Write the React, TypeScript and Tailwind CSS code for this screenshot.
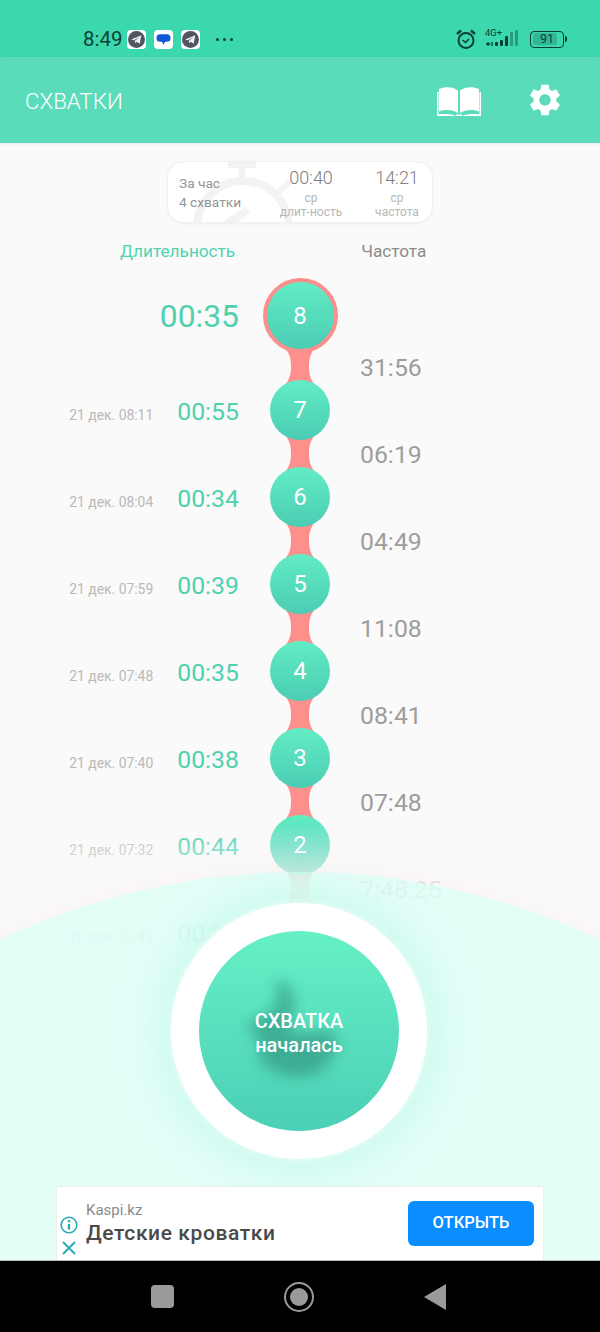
const nodes = [7, 6, 5, 4, 3, 2];

const leftRows = [
  { d: "21 дек. 08:11", t: "00:55" },
  { d: "21 дек. 08:04", t: "00:34" },
  { d: "21 дек. 07:59", t: "00:39" },
  { d: "21 дек. 07:48", t: "00:35" },
  { d: "21 дек. 07:40", t: "00:38" },
  { d: "21 дек. 07:32", t: "00:44" },
  { d: "20 дек. 22:43", t: "00:38" },
];
const freqs = ["31:56", "06:19", "04:49", "11:08", "08:41", "07:48", "7:48:25"];

function Tg() {
  return (
    <div className="w-[19px] h-[19px] rounded-[4px] bg-white flex items-center justify-center">
      <svg width="17" height="17" viewBox="0 0 16 16">
        <circle cx="8" cy="8" r="8" fill="#50555f" />
        <path d="M3 8 L12.5 4 L11 12 L8.2 10 L6.8 11.6 L6.5 9.2 L10.5 5.8 L5.5 8.8 Z" fill="#eeeeee" />
      </svg>
    </div>
  );
}

function Connector() {
  return (
    <svg width="30" height="37" viewBox="0 0 30 37" className="block -my-[5px]">
      <path d="M0 0 C5 6 6 12 6 18.5 C6 25 5 31 0 37 L30 37 C25 31 24 25 24 18.5 C24 12 25 6 30 0 Z" fill="#fd908d" />
    </svg>
  );
}

function Node({ n }: { n: number }) {
  return (
    <div className="relative w-[60px] h-[60px] rounded-full bg-gradient-to-b from-[#62ecc4] to-[#4bcdb4] flex items-center justify-center text-white text-[24px]">
      {n}
    </div>
  );
}

export default function App() {
  return (
    <div className="relative w-[600px] h-[1332px] overflow-hidden flex flex-col bg-[#fafafa] font-['Roboto',sans-serif]">
      {/* status bar */}
      <div className="h-[57px] shrink-0 bg-[#3bd8ae] flex items-end pb-[6px] pl-[83px] pr-[33px] text-[#0c3f33]">
        <span className="text-[20.5px] leading-[24px] mr-[4px]">8:49</span>
        <div className="flex items-center gap-[8px] h-[24px]">
          <Tg />
          <div className="w-[19px] h-[19px] rounded-[4px] bg-white flex items-center justify-center">
            <svg width="15" height="15" viewBox="0 0 14 14">
              <path d="M4 2 H10 A3.6 3.6 0 0 1 10 9.2 H8.4 L7 12 L5.6 9.2 H4 A3.6 3.6 0 0 1 4 2 Z" fill="#1058d8" />
            </svg>
          </div>
          <Tg />
          <div className="flex gap-[4px] ml-[8px]">
            <span className="w-[3px] h-[3px] rounded-full bg-[#0c3f33]" />
            <span className="w-[3px] h-[3px] rounded-full bg-[#0c3f33]" />
            <span className="w-[3px] h-[3px] rounded-full bg-[#0c3f33]" />
          </div>
        </div>
        <div className="ml-auto flex items-center h-[24px]">
          <svg width="22" height="22" viewBox="0 0 22 22" fill="none" stroke="#0c3f33" strokeWidth="2">
            <circle cx="11" cy="12.5" r="7.5" />
            <path d="M7.5 12 L10.5 14.5 L14 11" strokeWidth="1.6" />
            <path d="M2 6 L6 2.5 M20 6 L16 2.5" strokeWidth="2.4" />
          </svg>
          <div className="relative w-[38px] h-[20px] ml-[8px]">
            <span className="absolute left-0 -top-[1px] text-[9.5px] leading-[10px]">4G+</span>
            <svg width="38" height="20" viewBox="0 0 38 20" className="absolute inset-0">
              <path d="M1 15 H5 M3 13 V17 M7 13 V17" stroke="#0c3f33" strokeWidth="1.4" />
              <rect x="10" y="13" width="3" height="4" rx="1" fill="#0c3f33" />
              <rect x="15" y="11" width="3" height="6" rx="1" fill="#0c3f33" />
              <rect x="20" y="7" width="3" height="10" rx="1" fill="#0c3f33" />
              <rect x="25" y="3" width="3" height="14" rx="1" fill="#2a9c82" />
              <rect x="30" y="1" width="3" height="16" rx="1" fill="#2a9c82" />
            </svg>
          </div>
          <div className="ml-[7px] w-[34px] h-[17px] rounded-[4px] border-[1.5px] border-[#0c3f33] p-[1.5px] relative">
            <div className="w-[84%] h-full rounded-[2px] bg-[#31b795]" />
            <span className="absolute inset-0 flex items-center justify-center text-[12.5px] leading-none">91</span>
          </div>
          <span className="ml-[1px] w-[2px] h-[6px] rounded-r-sm bg-[#0c3f33]" />
        </div>
      </div>

      {/* header */}
      <div className="relative z-10 h-[86px] shrink-0 bg-[#5adcbb] flex items-center pl-[25px] shadow-[0_1px_4px_rgba(0,0,0,0.08)]">
        <span className="text-white text-[22.3px] font-light mt-[3px]">СХВАТКИ</span>
        <svg width="46" height="32" viewBox="0 0 46 32" className="ml-auto mt-[4px]" fill="#fff">
          <path d="M3 3 C10 0 17 1 22 4.5 V27 C17 24 10 23 3 25.5 Z" />
          <path d="M43 3 C36 0 29 1 24 4.5 V27 C29 24 36 23 43 25.5 Z" />
          <path d="M1 6 V30 H20 C16 28 8 27.5 2.5 28.5 V6 Z M45 6 V30 H26 C30 28 38 27.5 43.5 28.5 V6 Z M20 28.5 H26 V30 H20 Z" />
        </svg>
        <svg width="38" height="38" viewBox="0 0 24 24" fill="#fff" className="ml-[44px] mr-[36px]">
          <path d="M19.14 12.94c.04-.3.06-.61.06-.94 0-.32-.02-.64-.07-.94l2.03-1.58a.49.49 0 0 0 .12-.61l-1.92-3.32a.488.488 0 0 0-.59-.22l-2.39.96c-.5-.38-1.03-.7-1.62-.94l-.36-2.54a.484.484 0 0 0-.48-.41h-3.84c-.24 0-.43.17-.47.41l-.36 2.54c-.59.24-1.13.57-1.62.94l-2.39-.96c-.22-.08-.47 0-.59.22L2.74 8.87c-.12.21-.08.47.12.61l2.03 1.58c-.05.3-.09.63-.09.94s.02.64.07.94l-2.03 1.58a.49.49 0 0 0-.12.61l1.92 3.32c.12.22.37.29.59.22l2.39-.96c.5.38 1.03.7 1.62.94l.36 2.54c.05.24.24.41.48.41h3.84c.24 0 .44-.17.47-.41l.36-2.54c.59-.24 1.13-.56 1.62-.94l2.39.96c.22.08.47 0 .59-.22l1.92-3.32c.12-.22.07-.47-.12-.61l-2.01-1.58zM12 15.6c-1.98 0-3.6-1.62-3.6-3.6s1.62-3.6 3.6-3.6 3.6 1.62 3.6 3.6-1.62 3.6-3.6 3.6z" />
        </svg>
      </div>

      {/* main */}
      <div className="relative flex-1 flex flex-col pt-[18px]">
        {/* stats card */}
        <div className="relative ml-[167px] w-[266px] h-[62px] shrink-0 rounded-[16px] bg-white border border-[#f0f0f0] shadow-[0_1px_3px_rgba(0,0,0,0.05)] overflow-hidden flex">
          <svg width="130" height="62" viewBox="0 0 130 62" className="absolute left-[20px] top-0" fill="none" stroke="#f3f3f3">
            <circle cx="55" cy="65" r="46" strokeWidth="8" />
            <path d="M40 3 H68 M54 3 V18" strokeWidth="6" />
            <path d="M88 33 L102 19" strokeWidth="6" />
            <path d="M60 48 L38 62" strokeWidth="8" />
          </svg>
          <div className="relative w-[97px] shrink-0 pl-[11px] pt-[12px] text-[13.7px] leading-[19px] text-[#949494]">
            <div>За час</div>
            <div>4 схватки</div>
          </div>
          <div className="relative w-[92px] shrink-0 flex flex-col items-center pt-[5px] text-[#b6b6b6] text-[12px] leading-[14px]">
            <span className="text-[18px] leading-[22px] font-light text-[#808080] mb-[2px]">00:40</span>
            <span>ср</span>
            <span className="whitespace-nowrap">длит-ность</span>
          </div>
          <div className="relative w-[80px] shrink-0 flex flex-col items-center pt-[5px] text-[#b6b6b6] text-[12px] leading-[14px]">
            <span className="text-[18px] leading-[22px] font-light text-[#808080] mb-[2px]">14:21</span>
            <span>ср</span>
            <span>частота</span>
          </div>
        </div>

        {/* column titles */}
        <div className="flex h-[24px] mt-[16px] text-[17.2px] leading-[24px] shrink-0">
          <span className="ml-[120px] text-[#4fd3b0]">Длительность</span>
          <span className="ml-[126px] text-[#8c8c8c]">Частота</span>
        </div>

        {/* timeline */}
        <div className="flex mt-[15px]">
          <div className="w-[239px] shrink-0 flex flex-col items-end pt-[2px]">
            <div className="h-[74px] mb-[14px] flex items-center text-[31.8px] text-[#4fd1ae]">00:35</div>
            {leftRows.map((r) => (
              <div key={r.d} className="h-[87px] flex items-center">
                <div className="flex items-baseline">
                  <span className="text-[13.9px] text-[#b9b9b9] mr-[24px]">{r.d}</span>
                  <span className="text-[24.8px] text-[#4fd1ae]">{r.t}</span>
                </div>
              </div>
            ))}
          </div>
          <div className="w-[122px] shrink-0 flex flex-col items-center">
            <div className="relative w-[75px] h-[75px] rounded-full border-[4px] border-[#fb8f8d] bg-gradient-to-b from-[#62ecc4] to-[#4bcdb4] flex items-center justify-center text-white text-[24px]">
              8
            </div>
            {nodes.map((n) => (
              <div key={n} className="flex flex-col items-center">
                <Connector />
                <Node n={n} />
              </div>
            ))}
            <Connector />
          </div>
          <div className="flex-1 flex flex-col pt-[46px] -ml-px">
            {freqs.map((f) => (
              <div key={f} className="h-[87px] flex items-center text-[24.8px] text-[#9d9d9d]">
                {f}
              </div>
            ))}
          </div>
        </div>

        {/* fade over the list */}
        <div className="absolute left-0 right-0 top-[680px] h-[62px] bg-gradient-to-b from-[#fafafa00] to-[#fafafacc]" />
        <div className="absolute left-0 right-0 top-[742px] h-[130px] bg-[#fafafacc]" />

        {/* curved mint area */}
        <div className="absolute left-[-400px] top-[729px] w-[1400px] h-[1400px] rounded-full bg-[#d4fff599] shadow-[0_0_40px_rgba(255,205,195,0.15)]" />

        {/* main button */}
        <div className="absolute left-[171px] top-[760px] w-[256px] h-[256px] rounded-full bg-white shadow-[0_0_10px_rgba(255,255,255,0.8),0_0_50px_rgba(110,240,205,0.4)] flex items-center justify-center">
          <div className="relative w-[200px] h-[200px] rounded-full bg-gradient-to-b from-[#66f0c5] to-[#4bcfb6] overflow-hidden flex items-center justify-center">
            <svg width="200" height="200" viewBox="0 0 200 200" className="absolute inset-0">
              <defs>
                <filter id="blurBaby" x="-30%" y="-30%" width="160%" height="160%">
                  <feGaussianBlur stdDeviation="7" />
                </filter>
              </defs>
              <path d="M80 48 C90 52 96 62 95 76 C94 86 90 92 92 100 C100 104 108 98 116 102 C124 96 132 100 138 106 C140 118 134 132 118 142 C100 150 76 146 62 130 C58 118 58 110 60 104 C50 102 46 98 50 92 C60 84 76 84 78 70 C78 60 76 54 80 48 Z" fill="#2f8f7a" fillOpacity="0.6" filter="url(#blurBaby)" />
            </svg>
            <div className="relative flex flex-col items-center text-white leading-[24px] font-medium pt-[3px]">
              <span className="text-[20px]">СХВАТКА</span>
              <span className="text-[20px]">началась</span>
            </div>
          </div>
        </div>

        {/* ad */}
        <div className="absolute left-[56px] top-[1043px] w-[488px] h-[74px] bg-white border-t border-x border-[#eeeeee] flex items-center">
          <div className="w-[24px] self-stretch flex flex-col items-center pt-[29px]">
            <svg width="18" height="18" viewBox="0 0 18 18" fill="none" stroke="#25a9b6" strokeWidth="1.6">
              <circle cx="9" cy="9" r="7.8" />
              <path d="M9 8 V13.5" strokeWidth="2.4" />
              <path d="M9 4.2 V6.2" strokeWidth="2.4" />
            </svg>
            <svg width="16" height="16" viewBox="0 0 16 16" fill="none" stroke="#25a9b6" strokeWidth="1.8" className="mt-[6px]">
              <path d="M2 2 L14 14 M14 2 L2 14" />
            </svg>
          </div>
          <div className="ml-[5px] flex flex-col -mt-[2px]">
            <span className="text-[15px] leading-[20px] text-[#8a8a8a]">Kaspi.kz</span>
            <span className="text-[21px] leading-[26px] font-medium tracking-[0.6px] text-[#4a4a4a]">Детские кроватки</span>
          </div>
          <div className="ml-auto mr-[9px] w-[126px] h-[45px] rounded-[6px] bg-[#0a8dff] flex items-center justify-center text-white text-[16.5px] font-medium">
            ОТКРЫТЬ
          </div>
        </div>
      </div>

      {/* nav bar */}
      <div className="relative z-20 h-[72px] shrink-0 bg-black border-t border-[#bdbdbd] flex items-center">
        <div className="ml-[151px] w-[23px] h-[23px] rounded-[4px] bg-[#9a9a9a]" />
        <div className="ml-[110px] w-[30px] h-[30px] rounded-full border-[2.5px] border-[#9a9a9a] flex items-center justify-center">
          <div className="w-[18px] h-[18px] rounded-full bg-[#9a9a9a]" />
        </div>
        <svg width="22" height="26" viewBox="0 0 22 26" className="ml-[110px]">
          <path d="M22 0 V26 L0 13 Z" fill="#9a9a9a" />
        </svg>
      </div>
    </div>
  );
}
